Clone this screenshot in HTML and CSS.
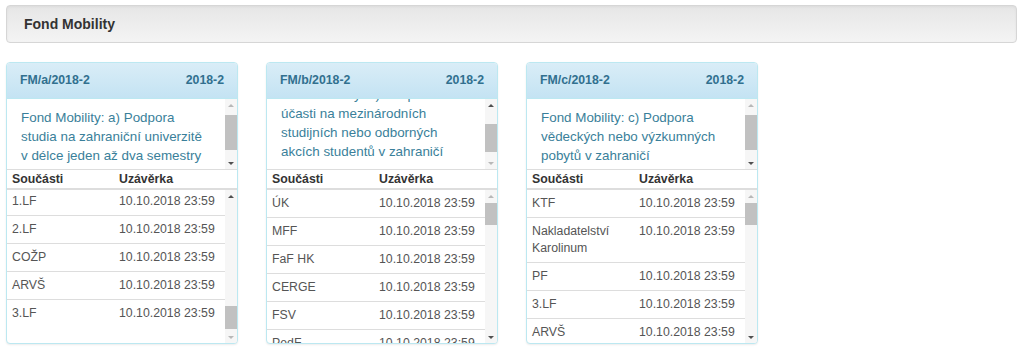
FILE: index.html
```html
<!DOCTYPE html>
<html lang="cs">
<head>
<meta charset="utf-8">
<title>Fond Mobility</title>
<link rel="stylesheet" href="styles.css">
<script src="script.js" defer></script>
</head>
<body>
<div class="page">
  <div class="title-bar"><h1 class="title">Fond Mobility</h1></div>
  <div class="cards">

    <section class="card">
      <header class="card-head"><span>FM/a/2018-2</span><span>2018-2</span></header>
      <div class="pane desc">
        <div class="pane-body"><p>Fond Mobility: a) Podpora studia na zahraniční univerzitě v délce jeden až dva semestry</p></div>
        <div class="sbar"><span class="sbtn up off"></span><span class="strack"><span class="sthumb" style="margin-top:4px;height:35px"></span></span><span class="sbtn down"></span></div>
      </div>
      <table class="grid grid-head"><colgroup><col class="c1"><col></colgroup>
        <thead><tr><th>Součásti</th><th>Uzávěrka</th></tr></thead></table>
      <div class="pane rows">
        <div class="pane-body" data-scroll="bottom">
          <table class="grid"><colgroup><col class="c1"><col></colgroup><tbody>
            <tr><td>KTF</td><td>10.10.2018 23:59</td></tr>
            <tr><td>ETF</td><td>10.10.2018 23:59</td></tr>
            <tr><td>HTF</td><td>10.10.2018 23:59</td></tr>
            <tr><td>PF</td><td>10.10.2018 23:59</td></tr>
            <tr><td>LF Plzeň</td><td>10.10.2018 23:59</td></tr>
            <tr><td>LF HK</td><td>10.10.2018 23:59</td></tr>
            <tr><td>FaF HK</td><td>10.10.2018 23:59</td></tr>
            <tr><td>FF</td><td>10.10.2018 23:59</td></tr>
            <tr><td>PedF</td><td>10.10.2018 23:59</td></tr>
            <tr><td>PřF</td><td>10.10.2018 23:59</td></tr>
            <tr><td>MFF</td><td>10.10.2018 23:59</td></tr>
            <tr><td>FTVS</td><td>10.10.2018 23:59</td></tr>
            <tr><td>FSV</td><td>10.10.2018 23:59</td></tr>
            <tr><td>FHS</td><td>10.10.2018 23:59</td></tr>
            <tr><td>ÚK</td><td>10.10.2018 23:59</td></tr>
            <tr><td>CERGE</td><td>10.10.2018 23:59</td></tr>
            <tr><td>ÚJOP</td><td>10.10.2018 23:59</td></tr>
            <tr><td>ÚVT</td><td>10.10.2018 23:59</td></tr>
            <tr><td>1.LF</td><td>10.10.2018 23:59</td></tr>
            <tr><td>2.LF</td><td>10.10.2018 23:59</td></tr>
            <tr><td>COŽP</td><td>10.10.2018 23:59</td></tr>
            <tr><td>ARVŠ</td><td>10.10.2018 23:59</td></tr>
            <tr><td>3.LF</td><td>10.10.2018 23:59</td></tr>
          </tbody></table>
        </div>
        <div class="sbar"><span class="sbtn up"></span><span class="strack"><span class="sthumb" style="margin-top:104px;height:23px"></span></span><span class="sbtn down off"></span></div>
      </div>
    </section>

    <section class="card">
      <header class="card-head"><span>FM/b/2018-2</span><span>2018-2</span></header>
      <div class="pane desc">
        <div class="pane-body" data-scroll="bottom"><p>Fond Mobility: b) Podpora účasti na mezinárodních studijních nebo odborných akcích studentů v zahraničí</p></div>
        <div class="sbar"><span class="sbtn up"></span><span class="strack"><span class="sthumb" style="margin-top:13px;height:28px"></span></span><span class="sbtn down off"></span></div>
      </div>
      <table class="grid grid-head"><colgroup><col class="c1"><col></colgroup>
        <thead><tr><th>Součásti</th><th>Uzávěrka</th></tr></thead></table>
      <div class="pane rows">
        <div class="pane-body">
          <table class="grid"><colgroup><col class="c1"><col></colgroup><tbody>
            <tr><td>ÚK</td><td>10.10.2018 23:59</td></tr>
            <tr><td>MFF</td><td>10.10.2018 23:59</td></tr>
            <tr><td>FaF HK</td><td>10.10.2018 23:59</td></tr>
            <tr><td>CERGE</td><td>10.10.2018 23:59</td></tr>
            <tr><td>FSV</td><td>10.10.2018 23:59</td></tr>
            <tr><td>PedF</td><td>10.10.2018 23:59</td></tr>
            <tr><td>FF</td><td>10.10.2018 23:59</td></tr>
            <tr><td>PřF</td><td>10.10.2018 23:59</td></tr>
            <tr><td>FTVS</td><td>10.10.2018 23:59</td></tr>
            <tr><td>FHS</td><td>10.10.2018 23:59</td></tr>
            <tr><td>KTF</td><td>10.10.2018 23:59</td></tr>
            <tr><td>ETF</td><td>10.10.2018 23:59</td></tr>
            <tr><td>HTF</td><td>10.10.2018 23:59</td></tr>
            <tr><td>PF</td><td>10.10.2018 23:59</td></tr>
          </tbody></table>
        </div>
        <div class="sbar"><span class="sbtn up off"></span><span class="strack"><span class="sthumb" style="margin-top:1px;height:22px"></span></span><span class="sbtn down"></span></div>
      </div>
    </section>

    <section class="card">
      <header class="card-head"><span>FM/c/2018-2</span><span>2018-2</span></header>
      <div class="pane desc">
        <div class="pane-body"><p>Fond Mobility: c) Podpora vědeckých nebo výzkumných pobytů v zahraničí</p></div>
        <div class="sbar"><span class="sbtn up off"></span><span class="strack"><span class="sthumb" style="margin-top:4px;height:35px"></span></span><span class="sbtn down"></span></div>
      </div>
      <table class="grid grid-head"><colgroup><col class="c1"><col></colgroup>
        <thead><tr><th>Součásti</th><th>Uzávěrka</th></tr></thead></table>
      <div class="pane rows">
        <div class="pane-body">
          <table class="grid"><colgroup><col class="c1"><col></colgroup><tbody>
            <tr><td>KTF</td><td>10.10.2018 23:59</td></tr>
            <tr><td>Nakladatelství Karolinum</td><td>10.10.2018 23:59</td></tr>
            <tr><td>PF</td><td>10.10.2018 23:59</td></tr>
            <tr><td>3.LF</td><td>10.10.2018 23:59</td></tr>
            <tr><td>ARVŠ</td><td>10.10.2018 23:59</td></tr>
            <tr><td>ETF</td><td>10.10.2018 23:59</td></tr>
            <tr><td>HTF</td><td>10.10.2018 23:59</td></tr>
            <tr><td>1.LF</td><td>10.10.2018 23:59</td></tr>
            <tr><td>2.LF</td><td>10.10.2018 23:59</td></tr>
            <tr><td>LF Plzeň</td><td>10.10.2018 23:59</td></tr>
            <tr><td>LF HK</td><td>10.10.2018 23:59</td></tr>
            <tr><td>FaF HK</td><td>10.10.2018 23:59</td></tr>
          </tbody></table>
        </div>
        <div class="sbar"><span class="sbtn up off"></span><span class="strack"><span class="sthumb" style="margin-top:1px;height:22px"></span></span><span class="sbtn down"></span></div>
      </div>
    </section>

  </div>
</div>
</body>
</html>
```

FILE: styles.css
```css
* { box-sizing: border-box; }

body {
  margin: 0;
  background: #fff;
  font-family: "Liberation Sans", Arial, sans-serif;
  color: #333;
}

.page {
  padding: 5px 6px;
}

.title-bar {
  border: 1px solid #d6d6d6;
  border-radius: 4px;
  background: linear-gradient(to bottom, #e6e6e6 0%, #f4f4f4 100%);
  box-shadow: inset 0 1px 3px rgba(0, 0, 0, 0.05), 0 1px 0 rgba(255, 255, 255, 0.1);
}

.title {
  margin: 0;
  padding: 10px 17px;
  font-size: 14px;
  line-height: 16px;
  font-weight: bold;
  color: #333;
}

.cards {
  display: flex;
  gap: 28px;
  margin-top: 19px;
}

.card {
  width: 232px;
  border: 1px solid #bce8f1;
  border-radius: 4px;
  background: #fff;
  box-shadow: 0 1px 2px rgba(0, 0, 0, 0.08);
  overflow: hidden;
}

.card-head {
  display: flex;
  justify-content: space-between;
  padding: 9px 13px;
  line-height: 17px;
  font-size: 12.3px;
  font-weight: bold;
  color: #31708f;
  background: linear-gradient(to bottom, #d9edf7 0%, #c4e3f3 100%);
  border-bottom: 1px solid #bce8f1;
}

/* scroll panes with a drawn scrollbar */
.pane {
  display: flex;
}

.pane-body {
  flex: 1;
  min-width: 0;
  overflow: hidden;
}

.sbar {
  width: 12px;
  flex: none;
  display: flex;
  flex-direction: column;
  background: #f6f6f6;
}

.sbtn {
  height: 12px;
  flex: none;
  display: flex;
  align-items: center;
  justify-content: center;
}

.sbtn::before {
  content: "";
  width: 0;
  height: 0;
  border-left: 3px solid transparent;
  border-right: 3px solid transparent;
}

.sbtn.up::before { border-bottom: 3px solid #505050; }
.sbtn.down::before { border-top: 3px solid #505050; }
.sbtn.up.off::before { border-bottom-color: #b8b8b8; }
.sbtn.down.off::before { border-top-color: #b8b8b8; }

.strack {
  flex: 1;
  display: flex;
  flex-direction: column;
}

.sthumb {
  display: block;
  background: #c1c1c1;
}

.desc {
  height: 71px;
  border-bottom: 1px solid #ddd;
}

.desc p {
  margin: 0;
  padding: 9px 20px 8px 14px;
  font-size: 13.4px;
  line-height: 19px;
  color: #3a7f9a;
}

.grid {
  width: 100%;
  border-collapse: collapse;
  table-layout: fixed;
  font-size: 12.3px;
}

.grid .c1 { width: 107px; }

.grid-head th {
  padding: 1px 5px;
  line-height: 16px;
  text-align: left;
  font-weight: bold;
  color: #333;
  border-bottom: 2px solid #ddd;
}

.rows {
  height: 153px;
}

.rows .grid {
  margin-bottom: 16px;
}

.rows td {
  padding: 5px;
  line-height: 17px;
  vertical-align: top;
  color: #555;
  border-top: 1px solid #ddd;
}

.rows tr:first-child td {
  border-top: 0;
}
```

FILE: script.js
```js
document.querySelectorAll('[data-scroll="bottom"]').forEach(function (el) {
  el.scrollTop = el.scrollHeight;
});
```
